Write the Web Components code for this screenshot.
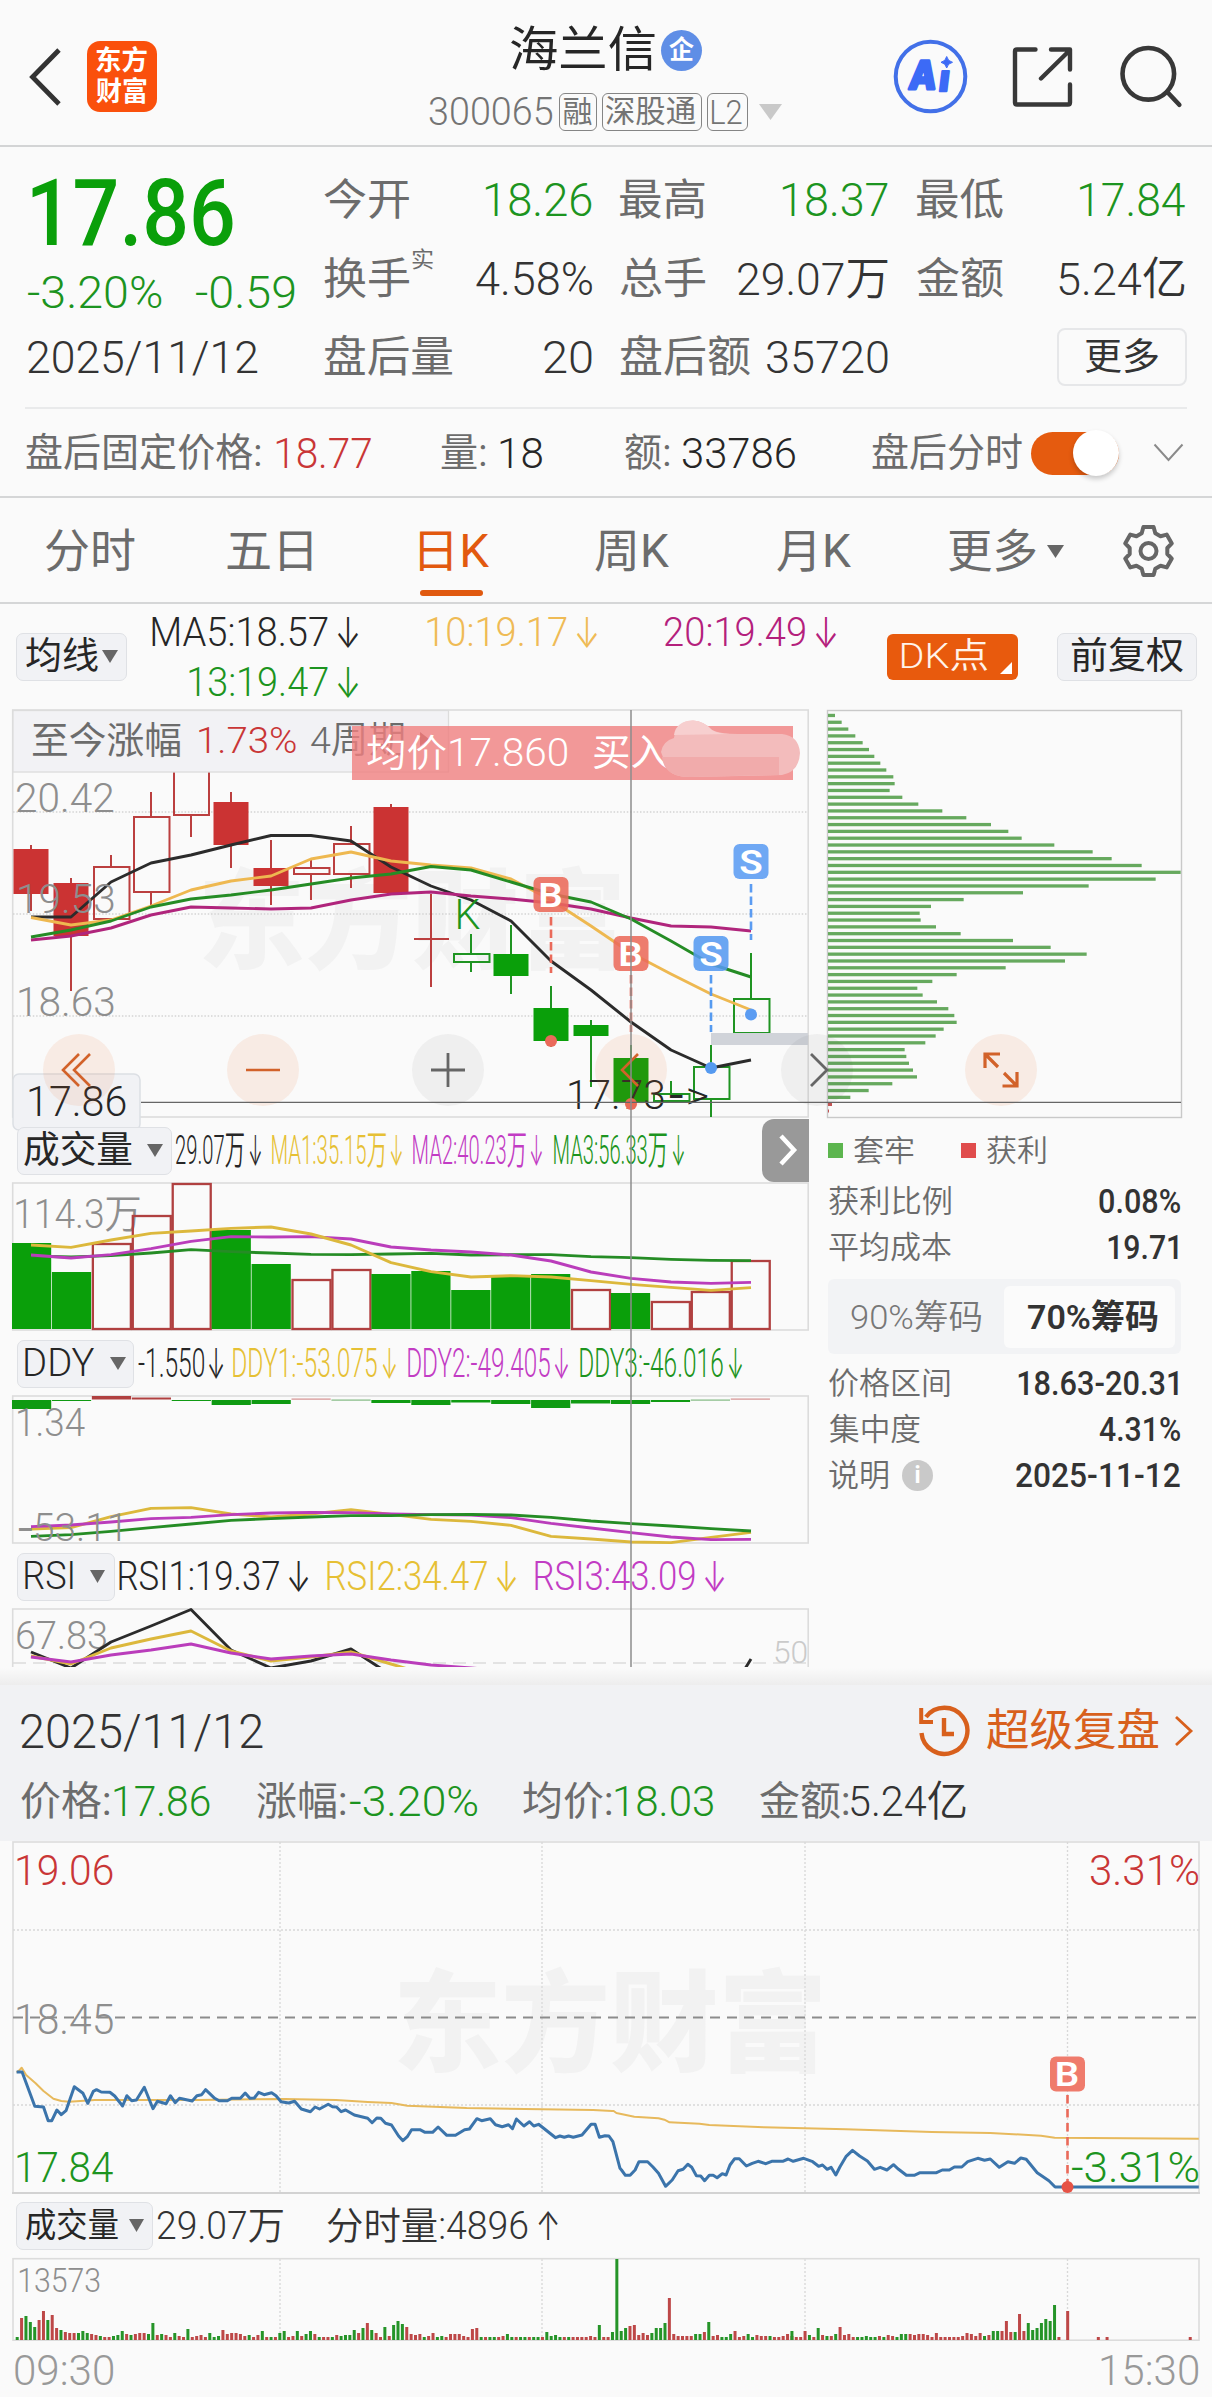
<!DOCTYPE html>
<html lang="zh-CN">
<head>
<meta charset="utf-8">
<title>海兰信 300065</title>
<style>
html,body{margin:0;padding:0;background:#fafafa}
body{width:1212px;height:2397px;overflow:hidden;font-family:Roboto,"Noto Sans CJK SC",sans-serif}
</style>
</head>
<body>
<stock-page></stock-page>
<script>
const FF='Roboto,"Noto Sans CJK SC",sans-serif';
const C={g:'#0a9f0a',G:'#1c9420',r:'#c93636',d:'#333333',k:'#262626',m:'#6c6c6c',l:'#8e8e8e',o:'#e2590f',y:'#e6c034',Y:'#efbb55',p:'#c23cc4',P:'#b4207c'};
const cx=document.createElement('canvas').getContext('2d');
function ink(s,size,weight,fam){
  cx.font=`${weight} ${size}px ${fam}`;
  const m=cx.measureText(s);
  return {l:-m.actualBoundingBoxLeft,w:m.actualBoundingBoxRight+m.actualBoundingBoxLeft};
}
/* text whose drawn width is exactly `w` */
class InkText extends HTMLElement{
  connectedCallback(){
    const w=+this.getAttribute('w'),size=+this.getAttribute('size'),weight=this.getAttribute('weight')||400,fam=this.getAttribute('fam')||FF;
    const m=ink(this.textContent,size,weight,fam),k=w/m.w;
    this.attachShadow({mode:'open'}).innerHTML=`<style>
    :host{display:block;flex:none;width:${w}px;height:${size}px;font:${weight} ${size}px/${size}px ${fam.replace(/"/g,"'")};color:${this.getAttribute('color')};white-space:pre}
    span{display:block;width:max-content;transform-origin:0 0;transform:translateX(${-m.l*k}px) scaleX(${k})}</style><span><slot></slot></span>`;
  }
}
customElements.define('ink-text',InkText);

const esc=s=>s.replace(/</g,'&lt;').replace(/>/g,'&gt;');
/* figures are set a little lighter than Chinese labels */
const auto=s=>/[0-9A-Z]/.test(s)?350:400;
const t=(a,b,size,color,s,weight,fam)=>({a,b,h:m=>`<ink-text w="${b-a}" size="${size}" color="${color}" weight="${weight||auto(s)}" ${fam?`fam="${fam}"`:''} style="margin-left:${m}px">${esc(s)}</ink-text>`});
const box=(a,b,html,cls='')=>({a,b,h:m=>`<div class="${cls}" style="flex:none;box-sizing:border-box;width:${b-a}px;margin-left:${m}px">${html}</div>`});
const ar=(a,b,color,dir='↓',size=42)=>t(a,b,size,color,dir,300,'Inter');
const tri=(a,b,h,color='#666')=>box(a,b,`<svg width="${b-a}" height="${h}" style="display:block"><path d="M0 0H${b-a}L${(b-a)/2} ${h}Z" fill="${color}"/></svg>`);
function row(start,items,style=''){
  let x=start;
  return `<div style="display:flex;align-items:center;${style}">`+items.map(i=>{const s=i.h(i.a-x);x=i.b;return s}).join('')+'</div>';
}
function T(x1,x2,base,size,color,s,weight){
  weight=weight||auto(s);
  const m=ink(s,size,weight,FF),k=(x2-x1)/m.w;
  return `<text transform="translate(${x1-m.l*k} ${base}) scale(${k} 1)" font-size="${size}" font-weight="${weight}" fill="${color}">${esc(s)}</text>`;
}
const pts=(ys,x0=31,dx=40)=>ys.map((y,i)=>`${x0+dx*i},${y}`).join(' ');
const line=(p,c,w=2.9)=>`<polyline points="${p}" fill="none" stroke="${c}" stroke-width="${w}" stroke-linejoin="round"/>`;
const svg=(w,y,h,body)=>`<svg width="${w}" height="${h}" viewBox="0 ${y} ${w} ${h}" style="display:block;overflow:visible" font-family='Roboto,"Noto Sans CJK SC",sans-serif'>${body}</svg>`;
const PILL='.pill{height:48px;background:#f1f2f5;border:1.5px solid #dfe1e5;border-radius:7px}.pill>div{height:45px}';
function def(name,css,html){
  customElements.define(name,class extends HTMLElement{
    constructor(){super();const r=this.attachShadow({mode:'open'}),e=document.createElement('template');
      e.innerHTML=`<style>:host{display:block}${css}</style>${html()}`;r.append(e.content.cloneNode(true));}
  });
}

def('app-header',`
:host{height:147px;box-sizing:border-box;border-bottom:2px solid #d3d4d5;display:flex}
.side{display:flex;align-items:center;height:153px}
.logo{height:71px;border-radius:13px;background:#fa500c;display:flex;flex-direction:column;justify-content:center;gap:4px}
.badge{height:41px;border-radius:50%;background:#5f8ee6}
.tag{height:38px;border:1.6px solid #858585;border-radius:6px}`,
()=>`<div class="side" style="width:429px">${row(0,[
 box(29,61,`<svg width="32" height="58" viewBox="0 0 32 58" style="display:block"><path d="M30 2 3.500 29 30 56" fill="none" stroke="#333" stroke-width="4.800"/></svg>`),
 box(87,157,row(87,[t(96,147,27,'#fff','东方',700)])+row(87,[t(96,147,27,'#fff','财富',700)]),'logo')])}</div>
<div style="width:460px">${row(429,[t(511,655,48,C.k,'海兰信'),box(661,702,row(661,[t(669,694,26,'#fff','企',700)],'height:41px'),'badge')],'height:50px;margin-top:25px')}
${row(429,[t(429,552,39,'#747474','300065'),box(559,597,row(560.600,[t(564,592,30,'#747474','融')],'height:35px'),'tag'),
box(602,702,row(603.600,[t(607,697,31,'#747474','深股通')],'height:35px'),'tag'),box(707,748,row(708.600,[t(713,743,34,'#747474','L2')],'height:35px'),'tag'),tri(759,782,16,'#c9c9c9')],'height:40px;margin-top:17px')}</div>
<div class="side">${row(889,[
 box(893,968,`<svg width="75" height="75" viewBox="0 0 75 75" style="display:block"><circle cx="37.500" cy="37.500" r="34.800" fill="none" stroke="#4270e8" stroke-width="4"/><g font-family="Inter" font-weight="800" fill="#3c6af6" stroke="#3c6af6" stroke-linejoin="round"><text transform="translate(15 50) skewX(-7)" font-size="39" textLength="27" lengthAdjust="spacingAndGlyphs" stroke-width="3">A</text><text transform="translate(45 52) skewX(-7)" font-size="36" stroke-width="2.500">ı</text></g><path d="M53.700 17.500Q54.700 22.300 59.500 23.300Q54.700 24.300 53.700 29Q52.700 24.300 48 23.300Q52.700 22.300 53.700 17.500Z" fill="#3c6af6" stroke="#3c6af6" stroke-width="1"/></svg>`),
 box(1012,1074,`<svg width="62" height="62" viewBox="0 0 62 62" style="display:block" fill="none" stroke="#383838" stroke-width="4.400" stroke-linecap="round" stroke-linejoin="round"><path d="M23.500 3.500H5Q3 3.500 3 5.500V56.500Q3 58.500 5 58.500H56Q58 58.500 58 56.500V38.500M39 3.500H58V23.500M57 5 29 32.500"/></svg>`),
 box(1120,1184,`<svg width="64" height="64" viewBox="0 0 64 64" style="display:block" fill="none" stroke="#383838" stroke-width="4.600" stroke-linecap="round"><circle cx="28.300" cy="28.800" r="25.800"/><path d="M47.300 47 59.300 59.800"/></svg>`)])}</div>`);

def('quote-panel',`
:host{display:flex;height:261px;box-sizing:border-box}
.more{height:58px;border:2px solid #e6e7e9;border-radius:8px}`,
()=>`<div style="width:324px;padding-top:11px">${row(0,[t(32,233,92,C.g,'17.86',500)],'height:112px')}
${row(0,[t(28,162,45,C.G,'-3.20%'),t(196,295,45,C.G,'-0.59')],'height:44px')}
${row(0,[t(28,258,45,C.d,'2025/11/12')],'height:86px')}</div>
<div style="width:888px;padding-top:13px">
${row(324,[t(324,409,43,C.m,'今开'),t(486,592,46,C.G,'18.26'),t(620,705,43,C.m,'最高'),t(783,888,46,C.G,'18.37'),t(917,1003,43,C.m,'最低'),t(1080,1185,46,C.G,'17.84')],'height:80px')}
${row(324,[t(324,409,43,C.m,'换手'),box(412,433,row(412,[t(412,433,22,C.m,'实')],'height:60px;align-items:flex-start')),t(476,592,46,C.d,'4.58%'),t(620,705,43,C.m,'总手'),t(738,888,45,C.d,'29.07万'),t(917,1003,43,C.m,'金额'),t(1059,1185,45,C.d,'5.24亿')],'height:78px')}
${row(324,[t(324,453,43,C.m,'盘后量'),t(544,592,45,C.d,'20'),t(620,750,43,C.m,'盘后额'),t(767,888,45,C.d,'35720'),box(1057,1187,row(1059,[t(1085,1158,37,C.d,'更多')],'height:54px'),'more')],'height:78px')}</div>`);

def('after-hours',`:host{height:91px;box-sizing:border-box;border-bottom:2px solid #d5d6d7}
.rule{height:2px;margin:-1px 25px 0;background:#e9eaeb}
.tog{height:43px;border-radius:22px;background:#e55b0f;display:flex;justify-content:flex-end;align-items:center}
.knob{width:46px;height:46px;border-radius:50%;background:#fff;box-shadow:0 3px 5px rgba(0,0,0,.2)}`,
()=>`<div class="rule"></div>${row(0,[t(26,260,39,C.m,'盘后固定价格:'),t(276,371,43,C.r,'18.77'),t(441,485,39,C.m,'量:'),t(500,542,43,C.k,'18'),t(625,669,39,C.m,'额:'),t(683,795,43,C.k,'33786'),t(872,1022,39,C.m,'盘后分时'),box(1031,1119,'<div class="knob"></div>','tog'),box(1153,1184,`<svg width="31" height="20" style="display:block"><path d="M1.500 1.500 15.500 17 29.500 1.500" fill="none" stroke="#8a8a8a" stroke-width="2"/></svg>`)],'height:88px')}`);

const gear=(()=>{let d='';const n=6;for(let i=0;i<n;i++){const a=i*60-90;const q=(r,b)=>{const z=(a+b)*Math.PI/180;return `${(27+r*Math.cos(z)).toFixed(1)} ${(27+r*Math.sin(z)).toFixed(1)}`};
 d+=(i?'L':'M')+q(19,-21)+'L'+q(24.5,-12)+'L'+q(24.5,12)+'L'+q(19,21);}return d+'Z'})();
def('period-tabs',`:host{height:106px;box-sizing:border-box;border-bottom:2px solid #d5d6d7}
.act{position:relative}.act i{position:absolute;left:0;bottom:-22px;width:63px;height:6px;border-radius:3px;background:#e0590f}`,
()=>row(0,[t(46,135,46,C.m,'分时'),t(227,312,46,C.m,'五日'),box(420,489,row(420,[t(420,489,46,C.o,'日K',400)])+'<i></i>','act'),t(595,669,46,C.m,'周K',400),t(777,851,46,C.m,'月K',400),t(949,1036,46,C.m,'更多'),tri(1047,1064,13),
box(1121,1176,`<svg width="55" height="54" viewBox="0 0 54 54" style="display:block" fill="none" stroke="#666" stroke-width="4" stroke-linejoin="round"><path d="${gear}"/><circle cx="27" cy="27" r="8"/></svg>`)],'height:106px'));

def('ma-bar',PILL+`:host{height:104px}.dk{height:46px;background:#e85a0d;border-radius:6px}`,
()=>row(0,[box(16,127,row(17.5,[t(26,98,37,C.k,'均线'),tri(102,118,13)]),'pill'),
box(152,850,row(152,[t(152,328,40,C.k,'MA5:18.57'),ar(338,358,C.k),t(427,567,40,C.Y,'10:19.17'),ar(577,597,C.Y),t(665,805,40,C.P,'20:19.49'),ar(816,836,C.P)],'height:50px;margin-top:3px')+row(152,[t(189,328,40,C.G,'13:19.47'),ar(338,358,C.G)],'height:50px')),
box(887,1018,row(887,[t(902,988,35,'#fff3ea','DK点'),box(1000,1012,`<svg width="12" height="12" style="display:block;margin-top:23px"><path d="M12 0V12H0Z" fill="#fff"/></svg>`)],'height:46px'),'dk'),
box(1057,1197,row(1058.500,[t(1071,1183,37,C.k,'前复权')]),'pill')],'height:105px'));

function mainChart(){
  const R='#cb3333',r='#bb3f3f',G='#0a9f0a',g='#1f9422';
  let s=`<rect x="12.700" y="710" width="795.500" height="407" fill="none" stroke="#dcdcdc" stroke-width="1.600"/>`;
  s+=`<text x="198" y="960" font-size="108" font-weight="900" fill="#f2f2f2" textLength="428" lengthAdjust="spacingAndGlyphs">东方财富</text>`;
  for(const y of[812,914,1016])s+=`<path d="M13 ${y}H808" stroke="#d4d4d4" stroke-width="1.500" stroke-dasharray="1.500 1.800"/>`;
  const K=[['F',849,894,845,911],['F',883,936,878,991],['H',867,919,855,919],['H',817,892,792,906],['O',772,815,772,837],['F',802,845,792,868],['F',868,886,840,905],['H',868,874,860,900],['H',844,874,826,888],['F',807,893,804,893],['X',939,939,894,987],['h',954,962,934,972],['f',954,976,925,994],['f',1008,1041,986,1047],['f',1025,1036,1020,1087],['f',1058,1103,1045,1103],['h',1094,1101,1081,1101],['h',1067,1099,1045,1117],['h',999,1033,953,1033]];
  K.forEach(([k,a,b,u,d],i)=>{const x=31+40*i,up=k===k.toUpperCase(),c=up?r:g,f=up?R:G;
    if(k.toLowerCase()==='f')s+=`<path d="M${x} ${u}V${d}" stroke="${c}" stroke-width="2"/><rect x="${x-17.500}" y="${a}" width="35" height="${b-a}" fill="${f}"/>`;
    else if(k==='X')s+=`<path d="M${x} ${u}V${d}M${x-17} ${a}H${x+18}" stroke="${c}" stroke-width="2"/>`;
    else if(k==='O')s+=`<path d="M${x-17} ${a}V${b}H${x+18}V${a}M${x} ${b}V${d}" fill="none" stroke="${c}" stroke-width="2"/>`;
    else s+=`<rect x="${x-17}" y="${a}" width="35.500" height="${b-a}" fill="none" stroke="${c}" stroke-width="2"/><path d="M${x} ${u}V${a}M${x} ${b}V${d}" stroke="${c}" stroke-width="2"/>`;});
  s+=`<rect x="711" y="1033" width="97" height="12" fill="#d0d3d9"/>`;
  s+=line(pts([917,917,882,863,855,845,835.5,835.5,841,867,886,900,921,961,990,1022,1050,1068,1060]),'#2b2b2b');
  s+=line(pts([917.5,925,920,906,890,881,876,859,852,861,865,868,879,900,926,953,974,994,1010]),'#eeb850');
  s+=line(pts([940,936,928,915,907,908,909,908,900,894,892,896,899,903,909,918,926,927,931]),'#b0257c');
  s+=line(pts([937,930,921,907,899,895,890,884,878,874,866.5,870,882,894,902,919,941,964,977]),'#258c25');
  s+=T(17,114,812,41,C.l,'20.42')+T(19,114,913,41,C.l,'19.53')+T(19,114,1015.5,41,C.l,'18.63');
  s+=T(457.5,480,929,42,C.G,'K');
  s+=`<rect x="13" y="710.500" width="435.500" height="61.500" fill="#f2f2f5" stroke="#dcdcdc" stroke-width="1.300"/>`+T(32,181,754,37,C.m,'至今涨幅')+T(199,296,753,37,C.r,'1.73%')+T(311,404,753,37,C.m,'4周期')+`<path d="M420 732l9 7-9 7z" fill="#8a5050"/>`;
  s+=`<rect x="352" y="726" width="441" height="54" fill="#f08080" fill-opacity=".8"/>`+T(367,567,766,38,'#fff','均价17.860')+T(593,668,766,37,'#fff','买入');
  s+=`<path d="M661 752Q663 741 674 738Q676 721 693 720.500Q704 721 712 730Q720 734 738 734H782Q799 736 800 753Q799 772 782 775L690 777Q672 777 667 768Z" fill="#f3bcbc"/><path d="M674 735Q676 721 693 720.500Q704 721 712 730Q718 734 730 734Z" fill="#f7cfcf"/><path d="M662 757H779V775L690 777Q664 777 662 757Z" fill="#f1abab"/>`;
  s+=T(569,664,1108.5,41,'#262626','17.73')+T(669,683,1108.5,41,'#262626','-',400)+T(688,707,1108.5,38,'#262626','>',300);
  const mk=(x,y,l,c,d1,d2,dy)=>`<rect x="${x-17.500}" y="${y}" width="35" height="35" rx="6" fill="${c}" fill-opacity=".88"/><path d="M${x} ${d1}V${d2}" stroke="${c}" stroke-width="2.600" stroke-dasharray="8.500 4"/><circle cx="${x}" cy="${dy}" r="6" fill="${c}"/>`+T(x-10.5,x+10.5,y+29.5,33,'#fff',l,600);
  s+=mk(551,877,'B','#ea6a5a',917,973,1041)+mk(631,936,'B','#ea6a5a',975,1032,1104)+mk(711,936,'S','#559af0',975,1032,1068)+mk(751,844,'S','#5b9cf2',884,940,1014.5);
  s+=`<rect x="13" y="1074" width="127" height="56" rx="6" fill="#f1f2f5" stroke="#dcdfe4" stroke-width="1.500"/>`+T(29,126,1116,42,'#262626','17.86');
  return svg(815,708,411,s);
}
function volChart(){
  const b='G1243 G1272 R1244 R1216 R1184 G1230 G1264 R1280 R1270 G1274 G1271 G1290 G1277 G1274 R1290 G1293 R1302 R1292 R1261'.split(' ');
  let s=`<rect x="12.700" y="1183" width="795.500" height="147" fill="none" stroke="#dcdcdc" stroke-width="1.600"/>`+T(16,140,1228,40,C.l,'114.3万');
  b.forEach((e,i)=>{const x=12+39.93*i,y=+e.slice(1);s+=e[0]==='G'?`<rect x="${x}" y="${y}" width="39.200" height="${1329-y}" fill="#0a9f0a"/>`:`<rect x="${x+1}" y="${y}" width="38" height="${1329-y}" fill="none" stroke="#b04040" stroke-width="2.300"/>`});
  const f=v=>pts(v.map(q=>1120+q/3));
  s+=line(f([408,411,407,399,389,395,399,403,404,402,400,405,404,404,410,413,418,421,422]),'#258c25')+line(f([405,414,404,386,364,350,351,350,357,381,390,396,405,423,456,475,486,490,487]),'#ba3dbb')+line(f([375,382,360,340,333,325,321,342,375,428,455,471,467,471,482,493,502,511,503]),'#dcb83c');
  return svg(815,1182,150,s);
}
function ddyChart(){
  const b=[['G',1400,1409],['G',1400,1401],['R',1396,1399.5],['R',1397.5,1399.5],['G',1400,1401],['G',1400,1405],['G',1400,1404],['r',1398.5,1399.7],['e',1399.5,1400.7],['G',1400,1403],['G',1400,1405],['G',1400,1402.5],['G',1400,1404],['G',1400,1408],['G',1400,1403.5],['G',1400,1404],['G',1400,1402],['e',1399.5,1400.7],['r',1398.5,1399.7]];
  const col={G:'#0f9a12',R:'#b04040',r:'#d49090',e:'#80b880'};
  let s=`<rect x="12.700" y="1396" width="795.500" height="147" fill="none" stroke="#dcdcdc" stroke-width="1.600"/>`;
  b.forEach(([c,a,d],i)=>s+=`<rect x="${12+39.930*i}" y="${a}" width="39.200" height="${d-a}" fill="${col[c]}"/>`);
  const f=v=>pts(v.map(q=>1380+q/3));
  s+=line(f([447,443,410,385,383,402,411,402,389,403,418,424,436,469,477,486,488,472,457]),'#dcb83c')+line(f([440,435,426,416,412,404,399,397,398,402,404,405,413,430,444,458,471,479,478]),'#ba3dbb')+line(f([469,464,454,443,432,421,416,411,407,407,404,403,405,412,423,431,438,446,453]),'#258c25');
  s+=T(18,85,1436,38,C.l,'1.34')+T(18,32,1541,38,C.l,'-')+T(36,120,1541,38,C.l,'53.11');
  return svg(815,1395,150,s);
}
function rsiChart(){
  let s=`<clipPath id="c"><rect x="0" y="1600" width="815" height="67"/></clipPath><path d="M12.700 1667V1609H808.200V1667" fill="none" stroke="#dcdcdc" stroke-width="1.600"/><path d="M13 1663H808" stroke="#dcdcdc" stroke-width="1.600" stroke-dasharray="13 7"/>`;
  s+=T(17,106,1649,38,C.l,'67.83')+T(775,807,1663,31,'#cacaca','50')+'<g clip-path="url(#c)">';
  s+=line(pts([1652,1668,1642,1626,1609.5,1650,1668,1661,1649,1675]),'#2b2b2b')+line('743,1672 751,1659','#2b2b2b')+line(pts([1656,1664,1648,1639,1631,1651,1661,1657,1652,1664,1676]),'#dcb83c')+line(pts([1657,1662,1655,1650,1644,1653,1659,1656,1654,1660,1665,1668,1671]),'#ba3dbb')+'</g>';
  return svg(815,1608,60,s);
}
function overlay(){
  const O='rgba(235,110,40,.1)',N='rgba(60,60,60,.06)';
  let s='';
  [[79,O],[263,O],[448,N],[631,O],[817,N],[1001,O]].forEach(([x,c])=>s+=`<circle cx="${x}" cy="1070" r="36" fill="${c}"/>`);
  s+=`<g fill="none" stroke="#d2622a" stroke-width="2.600"><path d="M79 1054 63 1070 79 1086M90 1054 74 1070 90 1086M246 1070H280M638 1054 622 1070 638 1086"/><path d="M998 1067 985 1054M985 1068V1054H1000M1004 1073 1017 1086M1017 1072V1086H1002.500" stroke-width="3.200"/></g><path d="M431 1070H465M448 1053V1087M811 1054 827 1070 811 1086" fill="none" stroke="#666" stroke-width="2.800"/>`;
  s+=`<path d="M141 1102.400H1181" stroke="#666" stroke-width="1.300"/><path d="M631 710V1667" stroke="#8c8c8c" stroke-width="1.500"/>`;
  return svg(1212,708,960,s);
}
def('kline-panel',PILL+`:host{width:815px}.next{height:63px;border-radius:12px 0 0 12px;background:#999}`,
()=>mainChart()
+row(0,[box(17,172,row(18.500,[t(24,132,37,C.k,'成交量'),tri(147,163,13)]),'pill'),t(176,244,40,C.k,'29.07万'),ar(250,261,C.k),t(272,386,40,C.y,'MA1:35.15万'),ar(391,402,C.y),t(413,526,40,C.p,'MA2:40.23万'),ar(531,542,C.p),t(554,667,40,C.G,'MA3:56.33万'),ar(673,684,C.G),box(762,809,`<svg width="47" height="63" style="display:block"><path d="M19 17 32 31 19 45" fill="none" stroke="#fff" stroke-width="4.500"/></svg>`,'next')],'height:63px')
+volChart()
+row(0,[box(17,134,row(18.500,[t(25,94,39,C.k,'DDY'),tri(110,126,13)]),'pill'),t(138,204,40,C.k,'-1.550'),ar(209,223,C.k),t(233,377,40,C.y,'DDY1:-53.075'),ar(383,396,C.y),t(408,550,40,C.p,'DDY2:-49.405'),ar(555,568,C.p),t(580,723,40,C.G,'DDY3:-46.016'),ar(729,742,C.G)],'height:63px')
+ddyChart()
+row(0,[box(17,115,row(18.500,[t(25,73,39,C.k,'RSI'),tri(90,105,13)]),'pill'),t(119,279,41,C.k,'RSI1:19.37'),ar(289,308,C.k),t(327,487,41,C.y,'RSI2:34.47'),ar(497,516,C.y),t(535,695,41,C.p,'RSI3:43.09'),ar(705,724,C.p)],'height:63px')
+rsiChart());

function chips(){
  const e=[75,95,115,136,158,177,193,211,229,250,254,239,277,325,397,469,543,595,635,733,848,905,995,1112,1037,836,639,461,363,329,332,378,452,609,722,830,765,587,440,367,322,338,381,415,433,440,401,377,346,284,289,297,309,321,247,176,121];
  let s=`<rect x="12.500" y="710.500" width="354" height="407" fill="none" stroke="#c9c9c9" stroke-width="1.400"/>`;
  e.forEach((v,i)=>s+=`<rect x="13" y="${713.8+i*6.820}" width="${(v-54)/3}" height="3.300" fill="#66a95e"/>`);
  s+=`<rect x="13" y="1102.500" width="4" height="3.500" fill="#c25555"/><rect x="13" y="1109.500" width="1" height="3" fill="#c25555"/>`;
  return svg(397,708,411,s);
}
const kv=(l1,l2,label,v1,v2,val,extra=[])=>row(815,[t(l1,l2,31,C.m,label,350),...extra,t(v1,v2,33,C.d,val,500)],'height:46px');
def('chip-panel',`:host{width:397px}.sq{height:15px}.seg{height:75px;background:#f2f3f5;border-radius:6px}.on{height:62px;background:#fbfbfb;border-radius:6px}
.i{height:31px;border-radius:50%;background:#c9c9c9}.gr{background:#5cb54e}.re{background:#e04c4c}`,
()=>chips()+row(815,[box(828,843,'','sq gr'),t(854,914,30,C.m,'套牢',350),box(961,976,'','sq re'),t(987,1046,30,C.m,'获利',350)],'height:55px;padding-top:4px')
+kv(829,951,'获利比例',1099,1180,'0.08%')+kv(829,951,'平均成本',1108,1178,'19.71')
+row(815,[box(828,1181,row(828,[t(851,981,34,'#777','90%筹码',350),box(1004,1175,row(1004,[t(1028,1158,34,C.d,'70%筹码',600)],'height:62px'),'on')],'height:75px'),'seg')],'margin:9px 0 6px')
+kv(829,950,'价格区间',1018,1178,'18.63-20.31')+kv(829,920,'集中度',1099,1180,'4.31%')
+kv(829,888,'说明',1016,1180,'2025-11-12',[box(902,933,row(902,[t(915.5,919.5,23,'#fff','i',700)],'height:31px'),'i')]));

def('market-area',`:host{display:flex;position:relative;height:960px}.ov{position:absolute;left:0;top:0}`,
()=>`<kline-panel></kline-panel><chip-panel></chip-panel><div class="ov">${overlay()}</div>`);

function intraday(){
  const A='42,126 56,126 88,229 110,231 122,272 131,272 144,240 155,254 167,242 188,170 210,190 222,220 236,184 244,179 256,186 278,187 290,198 310,228 321,197 333,212 345,210 365,172 387,236 398,214 420,221 431,197 443,218 454,205 486,213 498,197 510,194 520,179 543,205 554,212 575,212 586,205 608,205 620,189 632,205 643,204 654,187 668,194 687,188 698,197 711,215 730,219 745,214 762,237 785,245 797,231 808,237 830,223 841,230 851,231 863,245 874,240 896,255 930,265 941,278 953,264 963,265 975,280 990,285 1008,318 1019,332 1030,320 1041,299 1062,299 1075,307 1094,307 1108,291 1130,316 1152,316 1175,299 1187,297 1206,266 1218,272 1240,266 1253,284 1270,290 1286,284 1296,296 1306,267 1325,288 1339,275 1350,288 1362,283 1405,323 1416,318 1427,322 1438,318 1450,322 1472,315 1495,283 1505,283 1516,322 1530,317 1540,318 1550,335 1568,415';
  const B='55,420 65,436 77,436 90,420 100,395 122,395 135,410 150,430 168,469 185,450 200,422 213,418 225,403 235,412 247,437 258,438 268,452 280,436 290,436 300,443 313,431 323,435 333,405 345,386 357,386 375,408 390,400 405,394 425,401 440,394 468,394 482,387 495,394 522,385 545,395 560,409 570,405 582,418 592,412 604,435 615,410 630,380 647,361 665,378 685,393 703,418 718,412 735,420 752,404 765,418 785,436 805,436 820,428 862,428 877,420 895,420 908,411 927,411 942,395 968,385 985,391 1000,387 1023,412 1045,395 1062,400 1078,384 1092,388 1120,428 1150,452 1166,471 1534,471';
  const YA='42,127 48,122 55,113 66,135 90,160 110,183 135,206 155,213 175,215 240,210 500,210 720,207 850,210 930,216 990,219 1030,227 1180,234 1500,240 1548,243',YB='35,243 42,249 88,260 150,265 165,269 178,277 255,281 280,285 420,292 630,298 850,306 1000,309 1130,317 1165,323 1534,326';
  const f=(s,x0,k)=>s.split(' ').map(p=>{const[x,y]=p.split(',');return (x0+x/k).toFixed(1)+','+(2030+y/3).toFixed(1)}).join(' ');
  let s=`<text x="393" y="2063" font-size="110" font-weight="900" fill="#f2f2f2" textLength="434" lengthAdjust="spacingAndGlyphs">东方财富</text>`;
  s+=`<rect x="13" y="1842" width="1186" height="351" fill="none" stroke="#dcdcdc" stroke-width="1.600"/><path d="M12 2193H1200" stroke="#d2d2d2" stroke-width="2"/>`;
  s+=`<path d="M280 1842V2193M542 1842V2193M805 1842V2193M1067.500 1842V2193M13 1930H1199M13 2105H1199" stroke="#d8d8d8" stroke-width="1.300" stroke-dasharray="2 2"/><path d="M13 2017.400H1199" stroke="#8c8c8c" stroke-width="2" stroke-dasharray="10 7"/>`;
  s+=T(17,113,2034,42,C.l,'18.45');
  s+=line(f(YA,0,2.529)+' '+f(YB,600,2.562),'#e7b95c',2)+line(f(A,0,2.529)+' '+f(B,600,2.562),'#3b74ab',3);
  s+=T(17,113,1885,42,C.r,'19.06')+T(1091,1198,1885,42,C.r,'3.31%')+T(17,113,2182,42,C.G,'17.84')+T(1072,1198,2182,42,C.G,'-3.31%');
  s+=`<rect x="1050" y="2056.500" width="35" height="35" rx="6" fill="#ef7b6c"/><path d="M1067.500 2095V2182" stroke="#ea6a5a" stroke-width="2.600" stroke-dasharray="8.500 5.500"/><circle cx="1067.500" cy="2187" r="6" fill="#e65346"/>`+T(1057,1078,2086,33,'#fff','B',600);
  return svg(1212,1841,353,s);
}
function intradayVol(){
  const a='G3 R22 G24 G18 G13 R20 R29 G20 R25 R12 G10 R8 R7 R7 G7 G9 G7 R6 R5 G4 R3 R3 G4 G5 G9 R6 G5 R6 R7 R7 G6 G17 R5 G6 R5 R3 G7 R4 R3 G11 R3 R4 R5 R3 G7 G3 G4 R10 R6 R7 R7 R6 R4 G5 R3 R5 G9 R3 G3 R3 G7 G9 R3 R4 G9 R4 G6 G9 R6 G3 R3 R3 G3 R5 G4 G5 G5 G10 R7 G12 R17 G10 R7 R3 G13 R4 G15 G19 G16 R13 R6 R5 R6 G3 R4 R7 G3 G4 R3 R6 R6 R6 R4 R3 R11 R12 G3 R3 G3 G3 R3 R4 G6 G3 R3 G3 G3 R3 G3 G3 R3 G8 G4 G5 G3 R3 G3 R3 R3 R3 R3 R4 R3 G15 R3 R3 G8 G81'.split(' ');
  const segs={138:'G9 G12 R14 R15 R5 R7 R5 G7 G12 G12 G17 R42 R6 R4 R4 R4 R4 G6 G6 R8 G18 R4 R5 G3 G3 G6 R9 R3 R4 G6 G3 R5 R4 R4 G4 R3 R3 R4 R6 R4',177:'G9 R3 R3 R9 G5 R3 G12 R5 G4 R4 G6 R13 R5 R6 R3 G3 G3 G4 G3 G3 R4 G3 R5 R4 G3 G6 G6 R6 R5 R6 R6 R5 R3',210:'R7 R3 R3 R3 R3 R3 R4 R7 R6 R4 R7 G4 R5 G9 G9 R9 R19 R8 G8 R26 R9 G17 G10 G12 G17 G21 G19 G35 R3'};
  let s=`<path d="M280 2259V2340M542 2259V2340M805 2259V2340M1067.500 2259V2340" stroke="#d8d8d8" stroke-width="1.300" stroke-dasharray="2 2"/><rect x="13" y="2258.700" width="1186" height="81.500" fill="none" stroke="#dcdcdc" stroke-width="1.600"/>`;
  const bar=(i,e)=>{const h=+e.slice(1);return `<rect x="${17.200+i*4.377-1.500}" y="${2340-h}" width="3" height="${h}" fill="${e[0]==='G'?'#259428':'#bd4747'}"/>`};
  const off=137-(a.length-1);
  a.forEach((e,i)=>s+=bar(i>110?i+off:i,e));
  for(const k in segs)segs[k].split(' ').forEach((e,i)=>s+=bar(+k+i,e));
  s+=bar(240,'R29')+bar(247,'R3')+bar(249,'R3')+bar(268,'R3');
  s+=T(19,100,2292,33,C.l,'13573');
  return svg(1212,2257,85,s);
}
def('replay-panel',PILL+`.top{height:17px;background:linear-gradient(#fafafa,#ededed)}.head{background:#f1f2f4;height:156px}`,
()=>`<div class="top"></div><div class="head">${row(0,[t(21,263,49,C.d,'2025/11/12'),
box(918,971,`<svg width="53" height="54" viewBox="0 0 53 54" style="display:block" fill="none" stroke="#d8601c" stroke-width="4.400"><path d="M3.500 29A23 23 0 1 0 8 13"/><path d="M3.200 4V18H15" stroke-width="4"/><path d="M26 14V30H36"/></svg>`),
t(987,1159,44,'#d8601c','超级复盘'),box(1174,1194,`<svg width="20" height="32" style="display:block"><path d="M2 2 17 16 2 30" fill="none" stroke="#d8601c" stroke-width="2.800"/></svg>`)],'height:92px')}
${row(0,[t(21,110,40,C.m,'价格:'),t(114,210,42,C.G,'17.86'),t(257,346,40,C.m,'涨幅:'),t(350,477,42,C.G,'-3.20%'),t(523,612,40,C.m,'均价:'),t(615,713,42,C.G,'18.03'),t(760,849,40,C.m,'金额:'),t(851,966,42,C.d,'5.24亿')],'height:50px')}</div>
${intraday()}
${row(0,[box(16,153,row(17.500,[t(26,118,34,C.k,'成交量'),tri(129,144,13)]),'pill'),t(157,283,38,C.d,'29.07万'),t(327,528,38,C.d,'分时量:4896'),ar(538,558,C.d,'↑',40)],'height:63px')}
${intradayVol()}
${row(0,[t(15,113,42,'#999','09:30'),t(1101,1198,42,'#999','15:30')],'height:50px;padding-top:4px')}`);

def('stock-page',`:host{width:1212px;height:2397px;overflow:hidden;background:#fafafa}`,
()=>`<app-header></app-header><quote-panel></quote-panel><after-hours></after-hours><period-tabs></period-tabs><ma-bar></ma-bar><market-area></market-area><replay-panel></replay-panel>`);
</script>
</body>
</html>
